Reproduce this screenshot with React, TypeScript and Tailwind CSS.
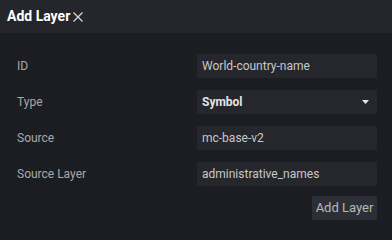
import { useState } from "react";

const fields = [
  { id: "id", label: "ID", value: "World-country-name" },
  { id: "type", label: "Type", value: "Symbol", select: true },
  { id: "source", label: "Source", value: "mc-base-v2" },
  { id: "source-layer", label: "Source Layer", value: "administrative_names" },
];

export default function App() {
  const [values, setValues] = useState<Record<string, string>>(
    Object.fromEntries(fields.map((f) => [f.id, f.value]))
  );

  return (
    <div className="w-[392px] h-[240px] bg-[#1c1d22] flex flex-col font-['Roboto',sans-serif]">
      <header className="h-[33px] bg-[#24262c] flex items-center px-[7px]">
        <h1 className="text-[14px] font-bold text-white">Add Layer</h1>
        <button className="ml-[3px] mt-[1px]">
          <svg width="10" height="10" viewBox="0 0 10 10">
            <path d="M0.5 0.5 L9.5 9.5 M9.5 0.5 L0.5 9.5" stroke="#dcdcdc" strokeWidth="1.2" />
          </svg>
        </button>
      </header>

      <div className="flex flex-col gap-[12px] pt-[21px] pl-[17px] pr-[15px]">
        {fields.map((f) => (
          <div key={f.id} className="flex items-center h-[24px]">
            <label className="w-[180px] text-[12px] text-[#a8a8a8]">{f.label}</label>
            {f.select ? (
              <div className="w-[180px] h-[24px] bg-[#26272d] flex items-center justify-between px-[5px]">
                <span className="text-[12px] font-bold text-[#e4e4e4]">{values[f.id]}</span>
                <svg width="7" height="4" viewBox="0 0 7 4" className="mr-[3px]">
                  <path d="M0 0 H7 L3.5 4 Z" fill="#e8e8e8" />
                </svg>
              </div>
            ) : (
              <input
                value={values[f.id]}
                onChange={(e) => setValues({ ...values, [f.id]: e.target.value })}
                className="w-[180px] h-[24px] bg-[#26272d] px-[5px] text-[12px] text-[#c8c8c8] outline-none"
              />
            )}
          </div>
        ))}
        <div className="flex justify-end -mt-[2px]">
          <button className="h-[24px] w-[65px] bg-[#2d2f36] rounded-[2px] text-[13px] text-[#b8b8b8]">
            Add Layer
          </button>
        </div>
      </div>
    </div>
  );
}
